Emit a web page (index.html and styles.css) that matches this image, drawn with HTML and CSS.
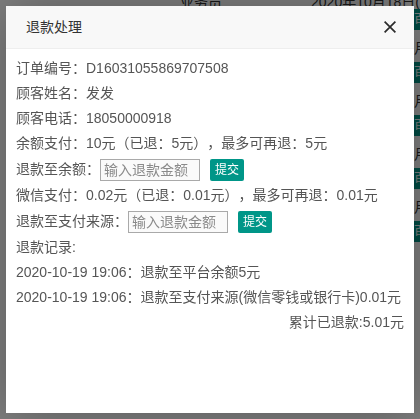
FILE: index.html
```html
<!DOCTYPE html>
<html lang="zh-CN">
<head>
<meta charset="utf-8">
<title>退款处理</title>
<link rel="stylesheet" href="styles.css">
</head>
<body>
<div class="page">
  <div class="page-top">
    <span class="page-top-a">业务员</span>
    <span class="page-top-b">2020年10月18日(</span>
  </div>
  <div class="page-list">
    <div class="page-row"><span class="page-btn">百宝</span><span class="page-txt">月日</span></div>
    <div class="page-row"><span class="page-btn">百宝</span><span class="page-txt">月日</span></div>
    <div class="page-row"><span class="page-btn">百宝</span><span class="page-txt">月日</span></div>
    <div class="page-row"><span class="page-btn">百宝</span><span class="page-txt">月日</span></div>
    <div class="page-row"><span class="page-btn">百宝</span></div>
  </div>
</div>
<div class="shade"></div>
<div class="layer">
  <div class="layer-title">退款处理
    <span class="layer-close"><svg width="12" height="12" viewBox="0 0 12 12"><path d="M0.6 0.6L11.4 11.4M11.4 0.6L0.6 11.4" stroke="#2b2b2b" stroke-width="1.7" fill="none"/></svg></span>
  </div>
  <div class="layer-content">
    <p class="line">订单编号：D16031055869707508</p>
    <p class="line">顾客姓名：发发</p>
    <p class="line">顾客电话：18050000918</p>
    <p class="line">余额支付：10元（已退：5元），最多可再退：5元</p>
    <div class="line form-line">退款至余额：<input class="amount" type="text" placeholder="输入退款金额"><button class="btn">提交</button></div>
    <p class="line">微信支付：0.02元（已退：0.01元），最多可再退：0.01元</p>
    <div class="line form-line">退款至支付来源：<input class="amount" type="text" placeholder="输入退款金额"><button class="btn">提交</button></div>
    <p class="line">退款记录:</p>
    <p class="line">2020-10-19 19:06：退款至平台余额5元</p>
    <p class="line">2020-10-19 19:06：退款至支付来源(微信零钱或银行卡)0.01元</p>
    <p class="line total">累计已退款:5.01元</p>
  </div>
</div>
</body>
</html>
```

FILE: styles.css
```css
html, body {
  margin: 0;
  padding: 0;
}
body {
  width: 420px;
  height: 419px;
  overflow: hidden;
  background: #fff;
  font-family: "Liberation Sans", "Noto Sans CJK SC", sans-serif;
  font-size: 14px;
  color: #333;
  position: relative;
  text-spacing-trim: space-all;
}
.page {
  padding: 0;
}
.page-top {
  display: flex;
  height: 14px;
  margin-top: -8px;
  line-height: 20px;
  font-size: 14px;
  color: #333;
}
.page-top-a {
  margin-left: 180px;
  width: 133px;
}
.page-top-b {
  white-space: nowrap;
}
.page-list {
  display: flex;
  flex-direction: column;
  padding-top: 3px;
  padding-left: 396px;
}
.page-row {
  height: 53px;
  display: flex;
  flex-direction: column;
}
.page-btn {
  display: block;
  width: 60px;
  height: 21px;
  background: #009688;
  color: #fff;
  font-size: 12px;
  line-height: 21px;
  padding-left: 18px;
  box-sizing: border-box;
}
.page-txt {
  display: block;
  margin-top: 10px;
  padding-left: 18px;
  line-height: 16px;
  white-space: nowrap;
}
.shade {
  position: fixed;
  inset: 0;
  background: rgba(0, 0, 0, 0.5);
}
.layer {
  position: absolute;
  left: 6px;
  top: 6px;
  width: 408px;
  height: 407px;
  background: #fff;
  box-shadow: 1px 1px 50px rgba(0, 0, 0, 0.3);
}
.layer-title {
  position: relative;
  height: 42px;
  line-height: 42px;
  padding: 0 80px 0 20px;
  background: #f8f8f8;
  border-bottom: 1px solid #eee;
  color: #333;
  font-size: 14px;
}
.layer-close {
  position: absolute;
  right: 18px;
  top: 15px;
  width: 12px;
  height: 12px;
  line-height: 0;
}
.layer-content {
  padding: 7px 10px;
  color: #555;
}
.line {
  margin: 0;
  height: 25px;
  line-height: 25px;
  white-space: nowrap;
}
.form-line {
  display: flex;
  align-items: center;
  height: 27px;
}
.amount {
  box-sizing: border-box;
  width: 100px;
  height: 22px;
  margin: 0;
  padding: 0 3px;
  border: 1px solid #a9a9a9;
  background: #fafafa;
  font-family: "Liberation Sans", "Noto Sans CJK SC", sans-serif;
  font-size: 14px;
  color: #555;
}
.amount::placeholder {
  color: #8a8a8a;
}
.btn {
  margin: 0 0 0 10px;
  height: 22px;
  line-height: 22px;
  padding: 0 5px;
  border: none;
  border-radius: 2px;
  background: #009688;
  color: #fff;
  font-family: "Liberation Sans", "Noto Sans CJK SC", sans-serif;
  font-size: 12px;
}
.total {
  text-align: right;
}
```
